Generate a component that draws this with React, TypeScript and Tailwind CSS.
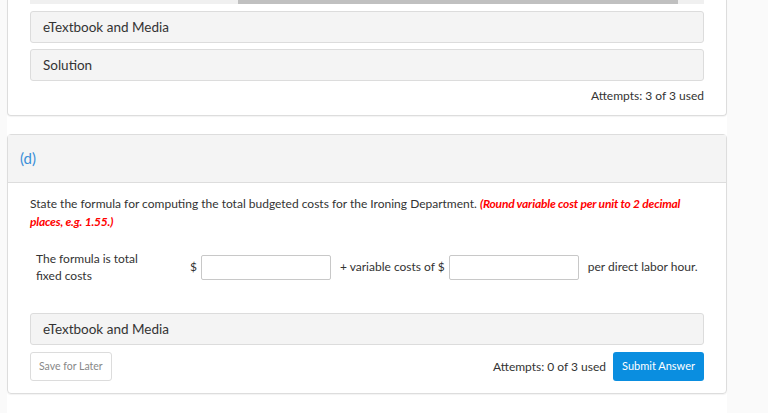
import React from 'react';

const lato = { fontFamily: 'Lato, "Open Sans", sans-serif' };

function Panel({ label }: { label: string }) {
  return (
    <div className="h-[32px] flex items-center px-3 bg-[#f4f4f4] border border-[#dcdcdc] rounded-[3px] text-[13.5px] text-[#333]">
      {label}
    </div>
  );
}

export default function App() {
  return (
    <div className="w-[768px] h-[413px] overflow-hidden bg-[#fafafa]" style={lato}>
      <div className="ml-[7px] w-[720px] h-full bg-white">
        {/* previous part, cut off at the top */}
        <div className="border border-t-0 border-[#dddddd] rounded-b-[4px] shadow-[0_1px_1px_rgba(0,0,0,0.05)] px-[22px] pb-[11px]">
          <div className="h-[4px] flex bg-[#f0f0f0]">
            <div className="w-[208px]" />
            <div className="w-[440px] bg-[#c0c0c0]" />
          </div>
          <div className="mt-[7px] flex flex-col gap-[6px]">
            <Panel label="eTextbook and Media" />
            <Panel label="Solution" />
          </div>
          <div className="mt-[7px] text-right text-[12px] leading-[16px] text-[#333]">Attempts: 3 of 3 used</div>
        </div>

        {/* part (d) */}
        <div className="mt-[18px] border border-[#dddddd] rounded-[4px] shadow-[0_1px_1px_rgba(0,0,0,0.05)]">
          <div className="h-[48px] flex items-center px-[12px] bg-[#f4f4f4] border-b border-[#dddddd] text-[15px] text-[#3b8fd9]">
            (d)
          </div>
          <div className="px-[22px] pb-[12px]">
            <p className="mt-[12px] text-[12px] leading-[18px] text-[#333]">
              State the formula for computing the total budgeted costs for the Ironing Department.{' '}
              <span className="text-[#ff0000] font-bold italic tracking-[-0.2px]">(Round variable cost per unit to 2 decimal places, e.g. 1.55.)</span>
            </p>
            <div className="mt-[19px] flex items-center text-[12px] text-[#333]">
              <div className="w-[156px] pl-[6px] leading-[17px]">
                The formula is total
                <br />
                fixed costs
              </div>
              <span className="ml-[4px]">$</span>
              <input className="ml-[4px] w-[130px] h-[25px] border border-[#c8c8c8] rounded-[2px] outline-none" />
              <span className="ml-[9px]">+ variable costs of $</span>
              <input className="ml-[4px] w-[130px] h-[25px] border border-[#c8c8c8] rounded-[2px] outline-none" />
              <span className="ml-[9px]">per direct labor hour.</span>
            </div>
            <div className="mt-[29px]">
              <Panel label="eTextbook and Media" />
            </div>
            <div className="mt-[7px] flex items-center">
              <button className="h-[29px] px-[8px] border border-[#dcdcdc] rounded-[3px] bg-white text-[10.5px] text-[#888]">
                Save for Later
              </button>
              <div className="flex-1" />
              <span className="text-[12px] text-[#333]">Attempts: 0 of 3 used</span>
              <button className="ml-[7px] h-[29px] px-[9px] rounded-[3px] bg-[#0a8ee0] text-white text-[11px]">
                Submit Answer
              </button>
            </div>
          </div>
        </div>
      </div>
    </div>
  );
}
